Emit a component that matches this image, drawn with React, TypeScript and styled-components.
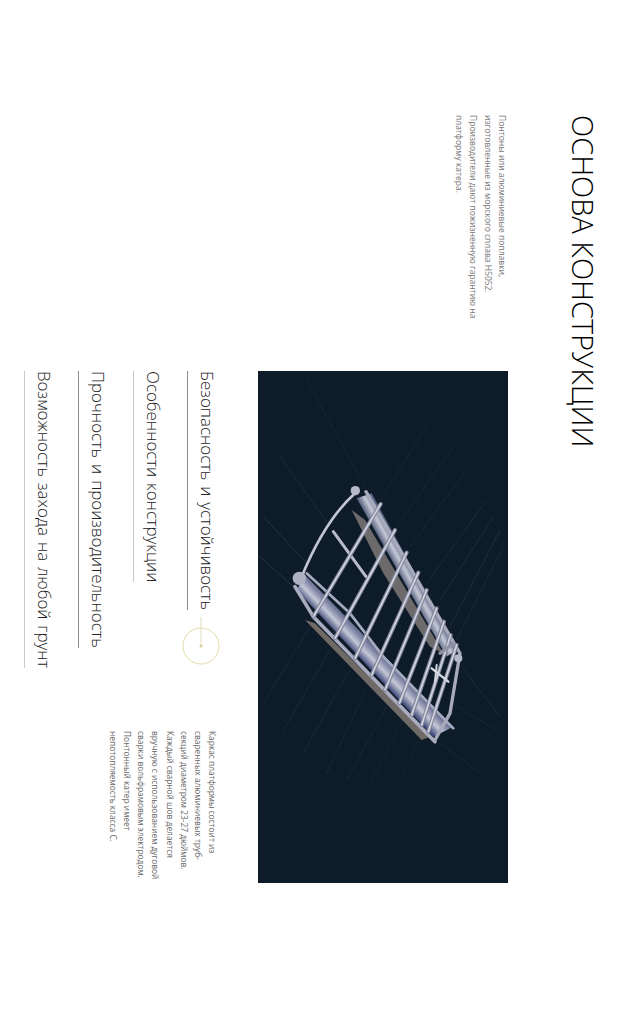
import React from "react";
import styled, { createGlobalStyle } from "styled-components";

const topics = [
  { label: "Безопасность и устойчивость", active: true },
  { label: "Особенности конструкции", active: false },
  { label: "Прочность и производительность", active: true },
  { label: "Возможность захода на любой грунт", active: false },
];

const ribs = [
  [220, 770, 422, 432],
  [285, 835, 465, 510],
  [345, 895, 500, 578],
  [395, 945, 535, 638],
  [435, 990, 560, 690],
  [478, 1030, 590, 745],
  [515, 1065, 612, 785],
  [545, 1095, 632, 825],
  [565, 1115, 650, 855],
];

const rays = [
  [200, 60, 375, 380, 0.08],
  [120, 290, 270, 500, 0.12],
  [70, 470, 200, 610, 0.16],
  [60, 590, 170, 690, 0.18],
  [420, 420, 560, 200, 0.08],
  [470, 500, 640, 260, 0.08],
  [510, 560, 680, 330, 0.09],
  [560, 670, 740, 420, 0.1],
  [600, 720, 760, 470, 0.12],
  [630, 800, 780, 510, 0.14],
  [650, 840, 790, 560, 0.1],
  [210, 800, 70, 1030, 0.1],
  [270, 870, 130, 1110, 0.1],
  [325, 935, 190, 1180, 0.1],
  [380, 985, 260, 1240, 0.09],
  [440, 1040, 320, 1260, 0.09],
  [490, 1080, 380, 1290, 0.07],
  [540, 1130, 460, 1310, 0.06],
  [600, 1150, 720, 1240, 0.09],
  [650, 1040, 770, 1110, 0.09],
  [665, 920, 780, 1070, 0.1],
];

const GlobalStyle = createGlobalStyle`
  html, body {
    margin: 0;
    background: #fff;
  }
`;

const Page = styled.main`
  box-sizing: border-box;
  width: 620px;
  height: 1020px;
  overflow: hidden;
  writing-mode: vertical-rl;
  padding-block-start: 17px;
  padding-inline-start: 115px;
  font-family: "Open Sans", sans-serif;
  background: #fff;
`;

const Title = styled.h1`
  margin: 0;
  font-size: 29px;
  line-height: 40px;
  font-weight: 300;
  color: #000;
  white-space: nowrap;
`;

const Lead = styled.p`
  margin: 0;
  margin-block-start: 54px;
  font-size: 8.5px;
  line-height: 14.3px;
  color: #777;
  white-space: nowrap;
`;

const Content = styled.section`
  margin-block-start: -56px;
  margin-inline-start: 256px;
  display: flex;
  flex-direction: column;
  gap: 8px;
`;

const Figure = styled.svg`
  display: block;
  width: 250px;
  height: 512px;
  background: #0e1b29;
`;

const Details = styled.div`
  display: flex;
  flex-direction: row;
  gap: 63px;
`;

const Topics = styled.ul`
  margin: 0;
  padding: 0;
  list-style: none;
  display: flex;
  flex-direction: column;
  align-items: flex-start;
  gap: 15.2px;
  margin-block-start: 24px;
`;

const Topic = styled.li<{ $active: boolean }>`
  position: relative;
  font-size: 16.9px;
  line-height: 38px;
  font-weight: 300;
  word-spacing: 1.5px;
  color: #222;
  white-space: nowrap;
  border-block-end: 1px solid ${(p) => (p.$active ? "#8d8d8d" : "#c9c9c9")};
`;

const Marker = styled.svg`
  position: absolute;
  top: calc(100% - 3px);
  left: -6px;
  width: 38px;
  height: 58px;
`;

const Note = styled.p`
  margin: 0;
  margin-block-start: 31px;
  font-size: 8.4px;
  line-height: 14.1px;
  color: #666;
  white-space: nowrap;
`;

const Frame = () => (
  <g>
    <defs>
      <filter id="soft">
        <feGaussianBlur stdDeviation="1.8" />
      </filter>
      <linearGradient id="frontPontoon" gradientUnits="userSpaceOnUse" x1="378" y1="913" x2="422" y2="871">
        <stop offset="0" stopColor="#47507f" />
        <stop offset="0.4" stopColor="#c4c8d6" />
        <stop offset="0.7" stopColor="#858baa" />
        <stop offset="1" stopColor="#555c80" />
      </linearGradient>
      <linearGradient id="rearPontoon" gradientUnits="userSpaceOnUse" x1="485" y1="654" x2="521" y2="634">
        <stop offset="0" stopColor="#5d6784" />
        <stop offset="0.5" stopColor="#c5c9d6" />
        <stop offset="1" stopColor="#596383" />
      </linearGradient>
    </defs>
    {rays.map(([x1, y1, x2, y2, o], i) => (
      <line key={i} x1={x1} y1={y1} x2={x2} y2={y2} stroke="#a9c3d6" strokeOpacity={o} strokeWidth="2.5" />
    ))}
    <g filter="url(#soft)" strokeLinecap="round" strokeLinejoin="round" fill="none">
      <polygon points="195,780 225,790 570,1130 545,1140" fill="#6f6b66" />
      <polygon points="335,450 375,480 610,880 570,860 430,640" fill="#6d6a6c" />
      <polygon points="350,415 395,400 650,870 620,890" fill="url(#rearPontoon)" />
      <polygon points="195,645 640,1100 580,1130 170,690" fill="url(#frontPontoon)" />
      <path d="M165 680 L220 770 L585 1145" stroke="#a9adbf" strokeWidth="11" />
      <path d="M200 640 L330 760 L430 890 L640 1105" stroke="#a6abc0" strokeWidth="8" />
      <path d="M185 650 Q255 480 345 400" stroke="#c3c6d2" strokeWidth="8" />
      <path d="M378 395 L660 880 L630 1060 L585 1140" stroke="#a7abbc" strokeWidth="10" />
      <path d="M280 515 L378 650" stroke="#b9bdcb" strokeWidth="9" />
      {ribs.map(([x1, y1, x2, y2], i) => (
        <g key={i}>
          <line x1={x1} y1={y1} x2={x2} y2={y2} stroke="#81869b" strokeWidth="12" />
          <line x1={x1} y1={y1} x2={x2} y2={y2} stroke="#d3d6e0" strokeWidth="5" />
        </g>
      ))}
      <path d="M575 925 L625 965" stroke="#d5d7df" strokeWidth="7" />
      <path d="M590 915 L585 965" stroke="#d5d7df" strokeWidth="6" />
      <path d="M600 880 L640 850" stroke="#8e92a4" strokeWidth="10" />
      <circle cx="178" cy="655" r="20" fill="#aeb2c2" stroke="none" />
      <circle cx="346" cy="392" r="14" fill="#b4b8c7" stroke="none" />
      <circle cx="655" cy="895" r="12" fill="#b4b8c7" stroke="none" />
    </g>
  </g>
);

export default function App() {
  return (
    <>
      <GlobalStyle />
      <Page>
        <Title>ОСНОВА КОНСТРУКЦИИ</Title>
        <Lead>
          Понтоны или алюминиевые поплавки,
          <br />
          изготовленные из морского сплава H5052.
          <br />
          Производители дают пожизненную гарантию на
          <br />
          платформу катера.
        </Lead>
        <Content>
          <Figure viewBox="54 33 750 1536">
            <Frame />
          </Figure>
          <Details>
            <Topics>
              {topics.map((topic, i) => (
                <Topic key={topic.label} $active={topic.active}>
                  {topic.label}
                  {i === 0 && (
                    <Marker viewBox="0 0 38 58">
                      <line x1="19" y1="10" x2="19" y2="39" stroke="#e0dcc0" />
                      <circle cx="19" cy="39" r="18" fill="none" stroke="#e2dba8" />
                      <circle cx="19" cy="39" r="1.5" fill="#d8cf98" />
                    </Marker>
                  )}
                </Topic>
              ))}
            </Topics>
            <Note>
              Каркас платформы состоит из
              <br />
              сваренных алюминиевых труб-
              <br />
              секций диаметром 23-27 дюймов.
              <br />
              Каждый сварной шов делается
              <br />
              вручную с использованием дуговой
              <br />
              сварки вольфрамовым электродом.
              <br />
              Понтонный катер имеет
              <br />
              непотопляемость класса С.
            </Note>
          </Details>
        </Content>
      </Page>
    </>
  );
}
